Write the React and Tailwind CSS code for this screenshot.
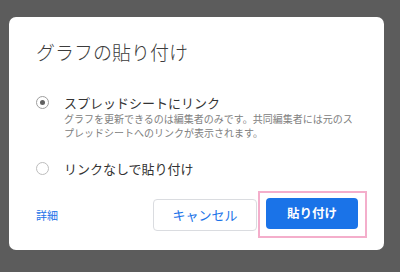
import React from "react";

export default function App() {
  const font = { fontFamily: '"Noto Sans CJK JP", "Noto Sans", sans-serif' };
  return (
    <div
      className="w-[400px] h-[272px] bg-[#5c5c5c] pt-[17px] pl-[9px] overflow-hidden"
      style={font}
    >
      <div className="w-[375px] h-[233px] bg-white rounded-[7px] pl-[27px] pr-[17px] pt-[21px] flex flex-col">
        <div className="text-[19px] leading-[28px] text-[#3c3c3c] font-light">
          グラフの貼り付け
        </div>
        <div className="mt-[27px] flex items-start gap-[15px]">
          <div className="mt-[3px] w-[13px] h-[13px] rounded-full border border-[#9e9e9e] flex items-center justify-center shrink-0">
            <div className="w-[5px] h-[5px] rounded-full bg-[#616161]" />
          </div>
          <div className="flex flex-col">
            <div className="text-[13px] leading-[19px] text-[#333]">スプレッドシートにリンク</div>
            <div className="text-[10px] leading-[14px] text-[#808080] whitespace-nowrap">
              グラフを更新できるのは編集者のみです。共同編集者には元のス
              <br />
              プレッドシートへのリンクが表示されます。
            </div>
          </div>
        </div>
        <div className="mt-[19px] flex items-center gap-[15px]">
          <div className="w-[13px] h-[13px] rounded-full border border-[#bdbdbd] shrink-0" />
          <div className="text-[13px] leading-[19px] text-[#333]">リンクなしで貼り付け</div>
        </div>
        <div className="mt-[13px] flex items-center">
          <div className="text-[11px] text-[#1a73e8] mt-[1px]">詳細</div>
          <div className="ml-auto flex items-center">
            <button className="w-[104px] h-[32px] rounded-[4px] border border-[#dadce0] bg-white text-[13px] text-[#1a73e8]" style={font}>
              キャンセル
            </button>
            <div className="ml-[1px] pl-[6px] pr-[7px] pt-[5px] pb-[7px] border-2 border-[#f4aecb]">
              <button className="w-[92px] h-[31px] rounded-[4px] bg-[#1a73e8] text-white text-[12.5px] font-bold" style={font}>
                貼り付け
              </button>
            </div>
          </div>
        </div>
      </div>
    </div>
  );
}
